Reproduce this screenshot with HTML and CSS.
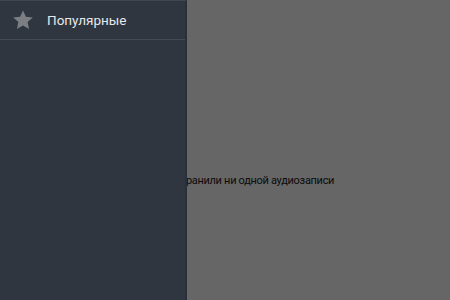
FILE: index.html
```html
<!DOCTYPE html>
<html lang="ru">
<head>
    <meta charset="UTF-8">
    <meta name="viewport" content="width=device-width, initial-scale=1.0">
    <title>Аудиозаписи</title>
    <link rel="stylesheet" href="styles.css">
</head>
<body>

<div class="page">
    <p class="empty">Вы еще не сохранили ни одной аудиозаписи</p>
</div>

<div class="overlay"></div>

<div class="sidebar">
    <div class="menu-item">
        <svg class="menu-icon" viewBox="0 0 24 24" width="24" height="24">
            <path d="M12 2.5l2.9 6.3 6.9.7-5.2 4.6 1.5 6.8L12 17.4l-6.1 3.5 1.5-6.8-5.2-4.6 6.9-.7z"/>
        </svg>
        <span>Популярные</span>
    </div>
</div>

</body>
</html>
```

FILE: styles.css
```css
* {
    box-sizing: border-box;
    margin: 0;
    padding: 0;
    font-family: Roboto, "Liberation Sans", sans-serif;
}

body {
    width: 450px;
    height: 300px;
    overflow: hidden;
    background-color: #ffffff;
    position: relative;
}

.page {
    height: 300px;
    display: flex;
    align-items: center;
    justify-content: center;
}

.empty {
    font-size: 11px;
    letter-spacing: -0.3px;
    color: #222;
    margin-top: 60px;
}

/* затемнение под меню */
.overlay {
    position: absolute;
    inset: 0;
    background: rgba(0, 0, 0, 0.6);
}

.sidebar {
    position: absolute;
    top: 0;
    left: 0;
    bottom: 0;
    width: 187px;
    background-color: #2f3640;
    border-top: 1px solid #3e4650;
    border-right: 2px solid #2a3039;
}

.menu-item {
    display: flex;
    align-items: center;
    height: 39px;
    padding-left: 11px;
    border-bottom: 1px solid #434b55;
    color: #e8e8e8;
    font-size: 13.5px;
}

.menu-icon {
    fill: #7b7e83;
    margin-right: 12px;
}
```
